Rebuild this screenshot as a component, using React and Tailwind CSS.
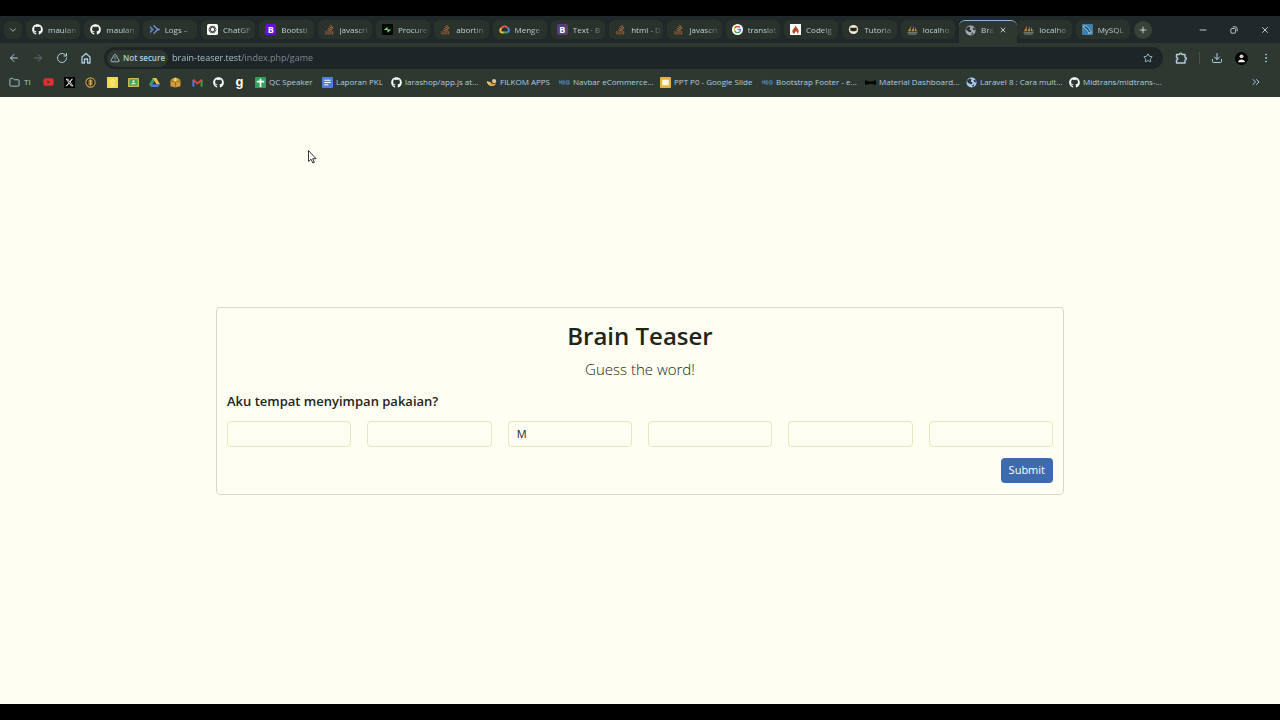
import React from "react";
import { FaGithub, FaStackOverflow, FaYoutube, FaXTwitter } from "react-icons/fa6";
import {
  ArrowLeft, ArrowRight, RotateCw, TriangleAlert, Star, Download,
  EllipsisVertical, ChevronDown, ChevronsRight, X, Plus, Minus, Folder,
} from "lucide-react";

const Svg = ({ children, box = "0 0 12 12" }) => (
  <svg viewBox={box} className="size-[11px] shrink-0" aria-hidden="true">{children}</svg>
);

const Github = () => <FaGithub className="size-[11px] shrink-0 text-white" />;
const Stack = () => <FaStackOverflow className="size-[11px] shrink-0 text-[#a5673f]" />;

const Logs = () => (
  <Svg>
    <path d="M1 1.500l4.500 4.500L1 10.500V7.500L2.500 6 1 4.500z" fill="#5b78c8" />
    <path d="M5 1.500L9.500 6 5 10.500" fill="none" stroke="#7f96e0" strokeWidth="1.500" />
    <circle cx="10.600" cy="6" r="1.200" fill="#7f96e0" />
  </Svg>
);

const ChatGpt = () => (
  <Svg>
    <rect width="12" height="12" rx="2" fill="#fff" />
    <g fill="none" stroke="#333" strokeWidth=".8">
      <ellipse cx="6" cy="6" rx="4" ry="2.200" />
      <ellipse cx="6" cy="6" rx="4" ry="2.200" transform="rotate(60 6 6)" />
      <ellipse cx="6" cy="6" rx="4" ry="2.200" transform="rotate(120 6 6)" />
    </g>
  </Svg>
);

const Bootstrap = () => (
  <span className="flex size-[11px] shrink-0 items-center justify-center rounded-xs bg-[#6610d8] text-[9px] leading-none font-bold text-white">B</span>
);
const BootstrapDark = () => (
  <span className="flex size-[11px] shrink-0 items-center justify-center rounded-xs bg-[#563d7c] text-[9px] leading-none font-bold text-white">B</span>
);

const Bolt = () => (
  <Svg>
    <rect width="12" height="12" rx="1" fill="#050805" />
    <path d="M2 6.500L6 3v3h4L6 9.500V6.500z" fill="#7ee08a" />
  </Svg>
);

const Cloud = () => (
  <Svg>
    <g fill="none" strokeWidth="2.200">
      <path d="M3 4.500C4 2 7.500 1.500 9 4" stroke="#e0553f" />
      <path d="M9 4c2.400 1 2.400 4.500 0 5.200" stroke="#4b86e8" />
      <path d="M9 9.200H4.500" stroke="#45a35b" />
      <path d="M5 9.200H3.500C.8 9 .6 5.500 3 4.500" stroke="#edbd35" />
    </g>
  </Svg>
);

const Google = () => (
  <Svg>
    <circle cx="6" cy="6" r="6" fill="#fff" />
    <g fill="none" strokeWidth="1.500">
      <path d="M8.600 3.900A3.400 3.400 0 0 0 3 4.500" stroke="#df4937" />
      <path d="M3 4.500a3.400 3.400 0 0 0 0 3" stroke="#eab530" />
      <path d="M3 7.500a3.400 3.400 0 0 0 5.400 1" stroke="#36a452" />
      <path d="M8.400 8.500A3.400 3.400 0 0 0 9.400 6H6" stroke="#4584ec" />
    </g>
  </Svg>
);

const Flame = () => (
  <Svg>
    <rect width="12" height="12" fill="#fff" />
    <path d="M6 1.500c.3 1.800 3.500 3.600 3.500 6C9.500 9.500 8 10.500 7.500 10.500c.8-1.200 0-2.500-1-3C6 8.700 5 9 5 10.500 3.500 10.500 2.300 9 2.500 7.500 2.700 5.500 5.700 4 6 1.500z" fill="#b5482b" />
  </Svg>
);

const Tutorial = () => (
  <Svg>
    <circle cx="6" cy="6" r="5" fill="#f1efd8" />
    <path d="M2.500 4.200h7v2.800l-2 .8h-3l-2-.8z" fill="#25251c" />
  </Svg>
);

const Sails = () => (
  <Svg>
    <path d="M4 1v7H.8C2.500 6 3.600 4 4 1zM7.300 1c-.2 3 .2 5 .6 7H4.700C6 6 7 4 7.300 1zM9 3c.3 2 1.300 4 2.500 5H8.600z" fill="#c9913c" />
    <path d="M.5 9.500h11M1.500 11h9" stroke="#8d8f86" />
  </Svg>
);

const Globe = ({ light = false }) => (
  <Svg>
    <circle cx="6" cy="6" r="5.500" fill={light ? "#a9c9ec" : "#a8adb2"} />
    <path d="M1 4l3-2.500 2 1L5 5l2 1-.5 2-2-.5L2 6zM8 3l2.500.5.500 2.500-2-.5zM7 9l2-1-.5 2.200-1.500.5z" fill="#273138" />
  </Svg>
);

const MySql = () => (
  <Svg>
    <rect width="12" height="12" rx="1" fill="#3b7fae" />
    <path d="M1.500 2c4-.5 6 2 7 5l2 2-2 .3-.7 1.700c-.8-1.700-1.300-4-3-5.500L3 5z" fill="#1d4764" stroke="#cbe2ef" strokeWidth=".8" />
  </Svg>
);

const Coin = () => (
  <Svg>
    <circle cx="6" cy="6" r="5" fill="#26200d" stroke="#c9a548" strokeWidth="1.200" />
    <path d="M4.500 3v6M6 2.500v7M7.500 3v6" stroke="#e6c365" />
  </Svg>
);
const Note = () => (
  <Svg>
    <rect width="12" height="12" fill="#f1d946" />
    <circle cx="6" cy="5" r="2" fill="none" stroke="#fff7b8" />
    <path d="M4 9h4" stroke="#fff7b8" />
  </Svg>
);
const Classroom = () => (
  <Svg>
    <rect y="1" width="12" height="10" rx="1" fill="#c9bb50" />
    <rect x="1.500" y="2.500" width="9" height="7" fill="#4aa458" />
    <circle cx="6" cy="4.800" r="1.200" fill="#e8f4dc" />
    <path d="M3.500 8c0-2 5-2 5 0z" fill="#e8f4dc" />
  </Svg>
);
const Drive = () => (
  <Svg>
    <path d="M4 1h4L4 8 2 11 0 8z" fill="#3a9c57" />
    <path d="M4 1h4l4 7H8z" fill="#edc03b" />
    <path d="M4 8h8l-2 3H2z" fill="#477ee0" />
    <path d="M6 4.500L8 8H4z" fill="#2e3732" />
  </Svg>
);
const Box = () => (
  <Svg>
    <path d="M2 2l4-1.500L10 2l1.500 2v6L6 11.500.5 10V4z" fill="#d29b35" />
    <path d="M.5 4L6 5.500 11.500 4M6 5.500v6" stroke="#815c19" fill="none" strokeWidth=".8" />
    <path d="M4.500 1h2.500v4H4.500z" fill="#f0ce7c" />
  </Svg>
);
const Gmail = () => (
  <Svg>
    <path d="M1.500 10.500V3" stroke="#4a80e3" strokeWidth="2.200" />
    <path d="M10.500 10.500V3" stroke="#35a254" strokeWidth="2.200" />
    <path d="M1.300 3L6 7l4.700-4" stroke="#dc4638" strokeWidth="2.200" fill="none" />
  </Svg>
);
const LetterG = () => (
  <span className="flex size-[11px] shrink-0 items-center justify-center pb-0.5 font-['Liberation_Sans',sans-serif] text-[13px] leading-none font-bold text-white">g</span>
);
const Sheets = () => (
  <Svg>
    <rect width="12" height="12" rx="1" fill="#35a05a" />
    <path d="M6 2v9M2 5h8" stroke="#fff" strokeWidth="1.800" />
  </Svg>
);
const Docs = () => (
  <Svg>
    <rect width="12" height="12" rx="1" fill="#4c80dc" />
    <path d="M2.500 3.500h7M2.500 6h7M2.500 8.500h4.500" stroke="#fff" strokeWidth="1.200" />
  </Svg>
);
const Slides = () => (
  <Svg>
    <rect width="12" height="12" rx="1" fill="#e4b437" />
    <rect x="2.500" y="3" width="7" height="6" fill="#fffbe8" />
  </Svg>
);
const Filkom = () => (
  <Svg>
    <path d="M1 4.500c0 6 9 7.500 10 2-2 1.500-5 1.500-6-1z" fill="#e0a548" />
    <circle cx="8.800" cy="4.500" r="2.200" fill="#efc77e" />
    <path d="M1 5.500l3 2" stroke="#fff0cb" />
  </Svg>
);
const Mdb = () => (
  <Svg>
    <path d="M0 8V4l1.500 2L3 4v4M4.500 4v4c3 0 3-4 0-4M8.500 4v4h1.500c1.700 0 1.700-2 0-2 1.400 0 1.400-2 0-2z" fill="none" stroke="#507da8" strokeWidth="1.100" />
  </Svg>
);
const Bow = () => (
  <Svg>
    <path d="M0 3.500l5 1.500h2l5-1.500v5L7 7.500H5L0 8.500z" fill="#050505" />
  </Svg>
);
const Profile = () => (
  <svg viewBox="0 0 12 12" className="size-[13px]" aria-hidden="true">
    <circle cx="6" cy="6" r="6" fill="#000" />
    <circle cx="6" cy="4" r="1.800" fill="#d7d2cb" />
    <path d="M2.800 9.500C3 6 9 6 9.200 9.500z" fill="#eee" />
  </svg>
);
const Restore = () => (
  <svg viewBox="0 0 10 10" className="size-2" fill="none" stroke="currentColor" aria-hidden="true">
    <rect x="1" y="3" width="6" height="6" rx="1.500" />
    <path d="M3.500 1h3A2.500 2.500 0 0 1 9 3.500v3" />
  </svg>
);
const Extension = () => (
  <svg viewBox="0 0 12 12" className="size-3" fill="none" stroke="currentColor" strokeWidth="1.400" strokeLinejoin="round" aria-hidden="true">
    <path d="M1.500 2.500h3c0-1.800 2.500-1.800 2.500 0h3v3c1.800 0 1.800 2.500 0 2.500v3H1.500V8c1.700 0 1.700-2.500 0-2.500z" />
  </svg>
);
const Home = () => (
  <svg viewBox="0 0 12 12" className="size-3" fill="none" stroke="currentColor" strokeWidth="1.300" strokeLinejoin="round" aria-hidden="true">
    <path d="M2 5l4-3.500L10 5v6H7.500V7h-3v4H2z" />
  </svg>
);

const tabs = [
  [Github, "maulan"], [Github, "maulan"], [Logs, "Logs –"], [ChatGpt, "ChatGP"],
  [Bootstrap, "Bootsti"], [Stack, "javascri"], [Bolt, "Procure"], [Stack, "abortin"],
  [Cloud, "Menge"], [BootstrapDark, "Text · B"], [Stack, "html - D"], [Stack, "javascri"],
  [Google, "translat"], [Flame, "CodeIg"], [Tutorial, "Tutoria"], [Sails, "localho"],
  [Globe, "Bra", true], [Sails, "localho"], [MySql, "MySQL"],
];

const shortcuts = [
  ["YouTube", () => <FaYoutube className="size-3 text-[#e02f2f]" />],
  ["X", () => <span className="flex size-[11px] items-center justify-center bg-black"><FaXTwitter className="size-[9px] text-white" /></span>],
  ["Coin", Coin], ["Notes", Note], ["Classroom", Classroom], ["Drive", Drive],
  ["Package", Box], ["Gmail", Gmail], ["GitHub", Github], ["Goodreads", LetterG],
];

const bookmarks = [
  [Sheets, "QC Speaker", "w-[67px]"],
  [Docs, "Laporan PKL", "w-[69px]"],
  [Github, "larashop/app.js at...", "w-[95px]"],
  [Filkom, "FILKOM APPS", "w-[73px]"],
  [Mdb, "Navbar eCommerce...", "w-[101px]"],
  [Slides, "PPT P0 - Google Slide", "w-[102px]"],
  [Mdb, "Bootstrap Footer - e...", "w-[103px]"],
  [Bow, "Material Dashboard...", "w-[101px]"],
  [() => <Globe light />, "Laravel 8 : Cara mult...", "w-[103px]"],
  [Github, "Midtrans/midtrans-...", "w-[101px]"],
];

function Tab({ icon: Icon, label, active }) {
  return (
    <div
      className={
        active
          ? "flex h-[23px] w-full items-center gap-[5px] rounded-t-md border-t border-[#8fb9dc] bg-[#2c3830] pr-2.5 pb-1 pl-1.5"
          : "mr-1 flex h-[19px] min-w-0 flex-1 items-center gap-[5px] rounded-md bg-[#29332c] pl-1.5"
      }
    >
      <Icon />
      <button
        type="button"
        role="tab"
        aria-selected={!!active}
        className="min-w-0 flex-1 overflow-hidden mask-r-from-50% text-left text-[8px] leading-4 whitespace-nowrap text-[#c0d0dc]"
      >
        {label}
      </button>
      {active && (
        <button type="button" aria-label="Close tab">
          <X className="size-2 text-[#dce8f2]" strokeWidth={2.500} />
        </button>
      )}
    </div>
  );
}

export default function App() {
  return (
    <div className="relative flex min-h-screen flex-col bg-black py-4 font-['Open_Sans','Noto_Sans',sans-serif]">
      <header className="bg-[#2c3830] text-[#b4cce0]">
        <div className="flex h-[27px] items-center bg-[#20282a]">
          <button type="button" aria-label="Search tabs" className="mr-1 ml-1 flex size-[18px] items-center justify-center rounded-md bg-[#29332c]">
            <ChevronDown className="size-2.5" />
          </button>
          <div role="tablist" className="flex h-full min-w-0 flex-1 items-center">
            {tabs.map(([icon, label, active], i) => (
              <div key={i} className={active ? "flex min-w-0 flex-1 self-end" : "flex min-w-0 flex-1"}>
                <Tab icon={icon} label={label} active={active} />
              </div>
            ))}
          </div>
          <button type="button" aria-label="New tab" className="flex size-[18px] items-center justify-center rounded-full bg-[#384238]">
            <Plus className="size-2.5 text-[#dce8f2]" />
          </button>
          <div className="ml-[46px] flex items-center gap-5 pr-2.5 text-[#dce8f2]">
            <button type="button" aria-label="Minimize" className="flex w-2.5 justify-center"><Minus className="size-2.5" /></button>
            <button type="button" aria-label="Restore" className="flex w-3 justify-center"><Restore /></button>
            <button type="button" aria-label="Close" className="flex w-2.5 justify-center"><X className="size-2.5" /></button>
          </div>
        </div>

        <div className="flex h-[30px] items-center pr-2 pl-2">
          <div className="flex items-center gap-3">
            <button type="button" aria-label="Back"><ArrowLeft className="size-3" /></button>
            <button type="button" aria-label="Forward"><ArrowRight className="size-3 text-[#5f7076]" /></button>
            <button type="button" aria-label="Reload"><RotateCw className="size-3" /></button>
            <button type="button" aria-label="Home"><Home /></button>
          </div>
          <div className="ml-3 flex h-[22px] min-w-0 flex-1 items-center rounded-full bg-[#1d2526] pr-2.5 pl-[3px]">
            <button type="button" className="flex h-[17px] items-center gap-[3px] rounded-full bg-[#2c3830] px-[3px] text-[8px] font-semibold whitespace-nowrap">
              <TriangleAlert className="size-2.5" />
              Not secure
            </button>
            <input
              aria-label="Address"
              defaultValue="brain-teaser.test/index.php/game"
              className="ml-1 min-w-0 flex-1 bg-linear-to-r from-[#b4cce0] from-[70px] to-[#82939c] to-[70px] bg-clip-text text-[9px] leading-4 text-transparent caret-white outline-none"
            />
            <button type="button" aria-label="Bookmark this page"><Star className="size-2.5" /></button>
          </div>
          <button type="button" aria-label="Extensions" className="ml-3"><Extension /></button>
          <span className="mr-[11px] ml-3 h-3 w-px bg-[#46544c]" />
          <div className="flex items-center gap-3">
            <button type="button" aria-label="Downloads"><Download className="size-3" /></button>
            <button type="button" aria-label="Profile"><Profile /></button>
            <button type="button" aria-label="Menu"><EllipsisVertical className="size-3" /></button>
          </div>
        </div>

        <nav aria-label="Bookmarks" className="flex h-6 items-center gap-2.5 overflow-hidden pb-1.5 pl-[9px] text-[8px] leading-4 whitespace-nowrap">
          <button type="button" className="flex w-6 shrink-0 items-center gap-1">
            <Folder className="size-[11px] shrink-0" />TI
          </button>
          <div className="flex w-[202px] shrink-0 items-center justify-between">
            {shortcuts.map(([name, Icon]) => (
              <a key={name} href="#" aria-label={name} className="flex w-[11px] shrink-0 justify-center"><Icon /></a>
            ))}
          </div>
          <div className="flex min-w-0 flex-1">
            {bookmarks.map(([Icon, label, width]) => (
              <a key={label} href="#" className={`flex shrink-0 items-center gap-[3px] ${width}`}>
                <Icon />{label}
              </a>
            ))}
          </div>
          <button type="button" aria-label="More bookmarks" className="pr-[18px]"><ChevronsRight className="size-3" /></button>
        </nav>
      </header>

      <main className="flex flex-1 items-center justify-center bg-[#fefef2] px-4 text-[#212519]">
        <form
          onSubmit={(e) => e.preventDefault()}
          className="flex w-full max-w-[848px] flex-col rounded border border-[#d8dac8] px-2.5 pt-3 pb-[11px]"
        >
          <h1 className="text-center text-[24px] leading-8 font-semibold">Brain Teaser</h1>
          <p className="mt-[5px] text-center text-[15px] leading-6 font-light">Guess the word!</p>
          <h2 id="question" className="mt-2.5 text-[13px] leading-5 font-semibold">Aku tempat menyimpan pakaian?</h2>
          <div role="group" aria-labelledby="question" className="mt-2.5 grid grid-cols-6 gap-4">
            {["", "", "M", "", "", ""].map((letter, i) => (
              <input
                key={i}
                aria-label={`Letter ${i + 1}`}
                defaultValue={letter}
                maxLength={1}
                className="h-[26px] w-full min-w-0 rounded border border-[#e8e8bc] bg-transparent px-2 text-[11px] outline-none"
              />
            ))}
          </div>
          <button type="submit" className="mt-[11px] h-[25px] self-end rounded bg-[#3e6bb0] px-2 text-[11px] text-white">
            Submit
          </button>
        </form>
      </main>

      <svg viewBox="0 0 9 14" className="pointer-events-none absolute top-[150px] left-[308px] h-3.5 w-[9px]" aria-hidden="true">
        <path d="M.5.500v11l2.500-2.300L4.800 13l1.500-.7L4.700 8.700H8z" fill="#fff" stroke="#222" strokeWidth=".9" />
      </svg>
    </div>
  );
}
